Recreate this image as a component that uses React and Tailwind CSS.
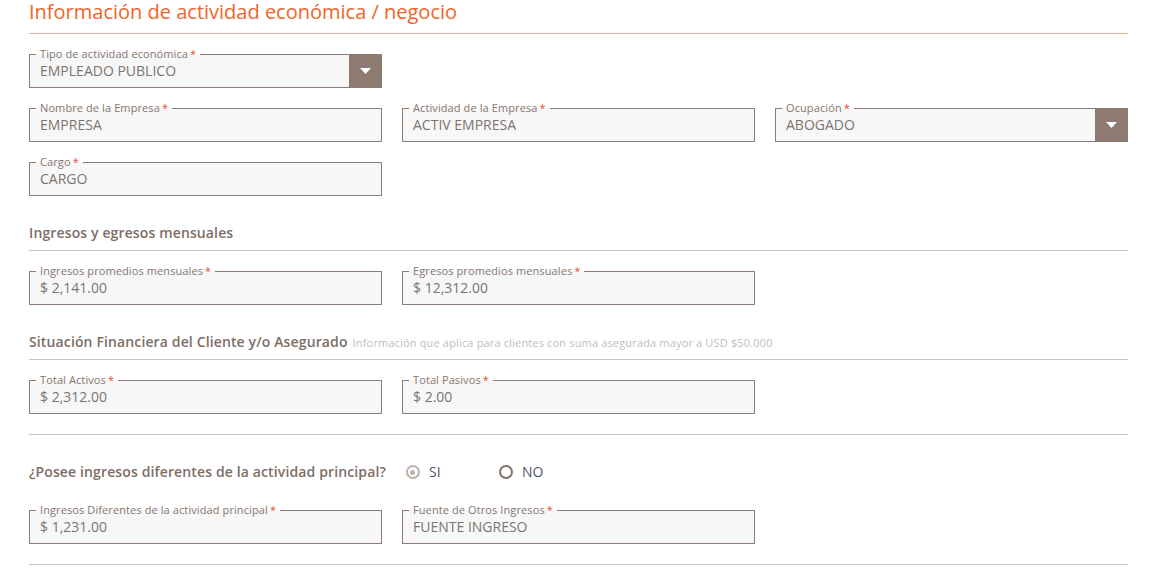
import React from 'react'

function Field({ label, value, select }) {
  return (
    <div className="relative h-[34px] border border-[#8a7b73] bg-[#f7f7f7] flex items-center">
      <span className="absolute -top-[8px] left-[6px] px-[4px] text-[11px] tracking-[0.1px] leading-[14px] text-[#86766e] bg-[linear-gradient(to_bottom,#ffffff_50%,#f7f7f7_50%)] whitespace-nowrap">
        {label}
        <span className="text-[#e84a2f] ml-[2px]">*</span>
      </span>
      <span className="flex-1 pl-[10px] text-[14px] leading-[20px] text-[#7c7470]">{value}</span>
      {select && (
        <div className="self-stretch w-[33px] -my-px -mr-px bg-[#8e7c73] flex items-center justify-center">
          <svg width="11" height="6" viewBox="0 0 11 6">
            <path d="M0 0 H11 L5.5 6 Z" fill="#ffffff" />
          </svg>
        </div>
      )}
    </div>
  )
}

function Radio({ label, checked }) {
  return (
    <div className="w-[93px] flex items-center gap-[9px]">
      {checked ? (
        <span className="w-[14px] h-[14px] rounded-full border-2 border-[#bcb1ab] flex items-center justify-center">
          <span className="w-[5px] h-[5px] rounded-full bg-[#bcb1ab]" />
        </span>
      ) : (
        <span className="w-[14px] h-[14px] rounded-full border-2 border-[#85746c]" />
      )}
      <span className="text-[14px] leading-[20px] text-[#4e5868]">{label}</span>
    </div>
  )
}

export default function App() {
  return (
    <div className="bg-white min-h-[573px] pl-[29px] pr-[37px] font-['Open_Sans',sans-serif]">
      <h1 className="text-[20px] leading-[24px] pb-[9px] border-b border-[#f4ad93] text-[#f0642a] font-normal">
        Información de actividad económica / negocio
      </h1>

      <div className="grid grid-cols-3 gap-x-[20px] gap-y-[20px] mt-[20px]">
        <Field label="Tipo de actividad económica" value="EMPLEADO PUBLICO" select />
        <div />
        <div />
        <Field label="Nombre de la Empresa" value="EMPRESA" />
        <Field label="Actividad de la Empresa" value="ACTIV EMPRESA" />
        <Field label="Ocupación" value="ABOGADO" select />
        <Field label="Cargo" value="CARGO" />
      </div>

      <h2 className="mt-[27px] pb-[7px] border-b border-[#cbc4c0] text-[14px] tracking-[0.13px] leading-[20px] font-semibold text-[#7d6d65]">
        Ingresos y egresos mensuales
      </h2>
      <div className="grid grid-cols-3 gap-x-[20px] mt-[20px]">
        <Field label="Ingresos promedios mensuales" value="$ 2,141.00" />
        <Field label="Egresos promedios mensuales" value="$ 12,312.00" />
      </div>

      <h2 className="mt-[27px] pb-[6px] border-b border-[#cbc4c0] text-[14px] tracking-[0.13px] leading-[20px] font-semibold text-[#7d6d65]">
        Situación Financiera del Cliente y/o Asegurado
        <span className="ml-[5px] text-[11px] tracking-[0.16px] font-normal text-[#c6bcb7]">
          Información que aplica para clientes con suma asegurada mayor a USD $50.000
        </span>
      </h2>
      <div className="grid grid-cols-3 gap-x-[20px] mt-[20px]">
        <Field label="Total Activos" value="$ 2,312.00" />
        <Field label="Total Pasivos" value="$ 2.00" />
      </div>

      <div className="mt-[20px] border-t border-[#cbc4c0]" />

      <div className="mt-[27px] flex items-center">
        <span className="text-[14px] tracking-[0.13px] leading-[20px] font-semibold text-[#7d6d65] mr-[20px]">
          ¿Posee ingresos diferentes de la actividad principal?
        </span>
        <Radio label="SI" checked />
        <Radio label="NO" />
      </div>

      <div className="grid grid-cols-3 gap-x-[20px] mt-[28px]">
        <Field label="Ingresos Diferentes de la actividad principal" value="$ 1,231.00" />
        <Field label="Fuente de Otros Ingresos" value="FUENTE INGRESO" />
      </div>

      <div className="mt-[20px] border-t border-[#cbc4c0]" />
    </div>
  )
}
